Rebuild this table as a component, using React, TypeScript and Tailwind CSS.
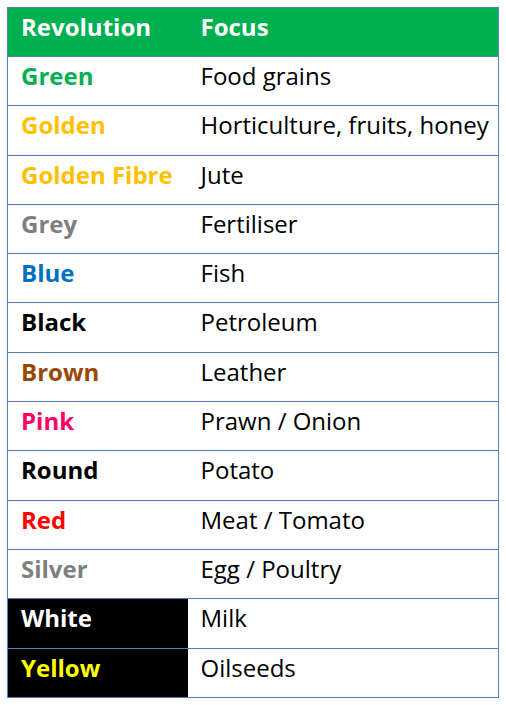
const rows: { name: string; color: string; focus: string; dark?: boolean }[] = [
  { name: "Green", color: "text-[#00b050]", focus: "Food grains" },
  { name: "Golden", color: "text-[#ffc000]", focus: "Horticulture, fruits, honey" },
  { name: "Golden Fibre", color: "text-[#ffc000]", focus: "Jute" },
  { name: "Grey", color: "text-[#7f7f7f]", focus: "Fertiliser" },
  { name: "Blue", color: "text-[#0070c0]", focus: "Fish" },
  { name: "Black", color: "text-black", focus: "Petroleum" },
  { name: "Brown", color: "text-[#984806]", focus: "Leather" },
  { name: "Pink", color: "text-[#ff0066]", focus: "Prawn / Onion" },
  { name: "Round", color: "text-black", focus: "Potato" },
  { name: "Red", color: "text-[#ff0000]", focus: "Meat / Tomato" },
  { name: "Silver", color: "text-[#7f7f7f]", focus: "Egg / Poultry" },
  { name: "White", color: "text-white", focus: "Milk", dark: true },
  { name: "Yellow", color: "text-[#ffff00]", focus: "Oilseeds", dark: true },
];

export default function App() {
  return (
    <div className="bg-white w-[506px] h-[705px] pt-[7px] pl-[7px] font-['Open_Sans',sans-serif]">
      <table className="border-collapse w-[492px] table-fixed text-[24px] leading-[30px]">
        <colgroup>
          <col className="w-[180px]" />
          <col />
        </colgroup>
        <thead>
          <tr className="h-[49px] bg-[#00b050] text-white font-bold">
            <th className="border-y border-l border-[#4f81bd] text-left align-top pt-[4px] pl-[13px]">
              Revolution
            </th>
            <th className="border-y border-r border-[#4f81bd] text-left align-top pt-[4px] pl-[13px]">
              Focus
            </th>
          </tr>
        </thead>
        <tbody>
          {rows.map((r) => (
            <tr key={r.name} className="h-[49.3px]">
              <td
                className={`border-y border-l border-[#4f81bd] align-top pt-[4px] pl-[13px] font-bold ${r.color} ${
                  r.dark ? "bg-black" : ""
                }`}
              >
                {r.name}
              </td>
              <td className="border-y border-r border-[#4f81bd] align-top pt-[4px] pl-[13px] text-black">
                {r.focus}
              </td>
            </tr>
          ))}
        </tbody>
      </table>
    </div>
  );
}
